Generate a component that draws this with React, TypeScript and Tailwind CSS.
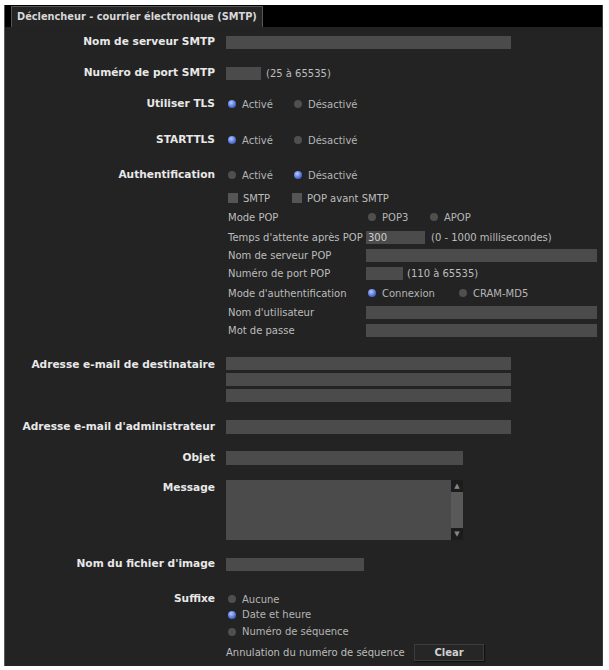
import React from "react";

const FONT = { fontFamily: '"DejaVu Sans", Verdana, sans-serif' };

const Radio = ({ on }: { on?: boolean }) => (
  <span
    className={
      on
        ? "inline-block w-[8px] h-[8px] rounded-full bg-[radial-gradient(circle_at_40%_35%,#b9c8ff,#4d6fd6_60%,#34489a)]"
        : "inline-block w-[8px] h-[8px] rounded-full bg-[#4f4f4f]"
    }
  />
);

const Option = ({ on, label, w }: { on?: boolean; label: string; w?: string }) => (
  <span className={"flex items-center gap-[6px] " + (w ?? "")}>
    <Radio on={on} />
    <span className="text-[10px] text-[#b5b5b5] whitespace-nowrap">{label}</span>
  </span>
);

const Field = ({ w, h = "h-[13px]", children }: { w: string; h?: string; children?: React.ReactNode }) => (
  <div className={"bg-[#4b4b4b] text-[10px] text-[#cfcfcf] pl-[2px] flex items-center " + w + " " + h}>{children}</div>
);

const Row = ({ label, mt, children, top }: { label: string; mt: string; children: React.ReactNode; top?: boolean }) => (
  <div className={"flex " + (top ? "items-start " : "items-center ") + mt}>
    <div className={"w-[210px] text-right text-[10.6px] font-bold text-[#e8e8e8] whitespace-nowrap " + (top ? "leading-[14px]" : "")}>{label}</div>
    <div className="ml-[11px] flex items-center">{children}</div>
  </div>
);

const SubRow = ({ label, mt, children }: { label: string; mt: string; children: React.ReactNode }) => (
  <div className={"flex items-center h-[14px] " + mt}>
    <div className="w-[138px] text-[10px] text-[#bdbdbd] whitespace-nowrap">{label}</div>
    <div className="flex items-center">{children}</div>
  </div>
);

export default function App() {
  return (
    <div className="w-[609px] h-[670px] bg-white pt-[5px] pl-[4px]" style={FONT}>
      <div className="w-[599px] h-[661px] bg-[#232323] border-l border-[#5a5a5a] border-r border-r-[#3a3a3a] flex flex-col">
        <div className="h-[22px] bg-black flex items-end pl-[6px]">
          <div className="h-[21px] px-[5px] bg-[#242424] border-t border-l border-r border-[#555] flex items-center text-[9.8px] font-bold text-[#d8d8d8] whitespace-nowrap">
            Déclencheur - courrier électronique (SMTP)
          </div>
        </div>

        <Row label="Nom de serveur SMTP" mt="mt-[8px] h-[14px]">
          <Field w="w-[285px]" />
        </Row>
        <Row label="Numéro de port SMTP" mt="mt-[17px] h-[14px]">
          <Field w="w-[35px]" />
          <span className="ml-[5px] text-[10px] text-[#bdbdbd]">(25 à 65535)</span>
        </Row>
        <Row label="Utiliser TLS" mt="mt-[17px] h-[14px]">
          <span className="ml-[2px]" />
          <Option on label="Activé" w="w-[66px]" />
          <Option label="Désactivé" />
        </Row>
        <Row label="STARTTLS" mt="mt-[22px] h-[14px]">
          <span className="ml-[2px]" />
          <Option on label="Activé" w="w-[66px]" />
          <Option label="Désactivé" />
        </Row>
        <Row label="Authentification" mt="mt-[21px] h-[14px]">
          <span className="ml-[2px]" />
          <Option label="Activé" w="w-[66px]" />
          <Option on label="Désactivé" />
        </Row>

        <div className="ml-[223px] flex flex-col">
          <div className="flex items-center h-[14px] mt-[9px]">
            <span className="flex items-center gap-[5px] w-[64px]">
              <span className="w-[10px] h-[10px] bg-[#555]" />
              <span className="text-[10px] text-[#bdbdbd]">SMTP</span>
            </span>
            <span className="flex items-center gap-[5px]">
              <span className="w-[10px] h-[10px] bg-[#555]" />
              <span className="text-[10px] text-[#bdbdbd]">POP avant SMTP</span>
            </span>
          </div>
          <SubRow label="Mode POP" mt="mt-[5px]">
            <span className="ml-[2px]" />
            <Option label="POP3" w="w-[62px]" />
            <Option label="APOP" />
          </SubRow>
          <SubRow label="Temps d'attente après POP" mt="mt-[6px]">
            <Field w="w-[59px]">300</Field>
            <span className="ml-[6px] text-[10px] text-[#bdbdbd]">(0 - 1000 millisecondes)</span>
          </SubRow>
          <SubRow label="Nom de serveur POP" mt="mt-[4px]">
            <Field w="w-[231px]" />
          </SubRow>
          <SubRow label="Numéro de port POP" mt="mt-[4px]">
            <Field w="w-[37px]" />
            <span className="ml-[4px] text-[10px] text-[#bdbdbd]">(110 à 65535)</span>
          </SubRow>
          <SubRow label="Mode d'authentification" mt="mt-[6px]">
            <span className="ml-[2px]" />
            <Option on label="Connexion" w="w-[91px]" />
            <Option label="CRAM-MD5" />
          </SubRow>
          <SubRow label="Nom d'utilisateur" mt="mt-[5px]">
            <Field w="w-[231px]" />
          </SubRow>
          <SubRow label="Mot de passe" mt="mt-[4px]">
            <Field w="w-[231px]" />
          </SubRow>
        </div>

        <Row label="Adresse e-mail de destinataire" mt="mt-[20px]" top>
          <div className="flex flex-col gap-[3px]">
            <Field w="w-[285px]" />
            <Field w="w-[285px]" />
            <Field w="w-[285px]" />
          </div>
        </Row>
        <Row label="Adresse e-mail d'administrateur" mt="mt-[18px] h-[14px]">
          <Field w="w-[285px]" h="h-[14px]" />
        </Row>
        <Row label="Objet" mt="mt-[17px] h-[14px]">
          <Field w="w-[237px]" h="h-[14px]" />
        </Row>
        <Row label="Message" mt="mt-[15px]" top>
          <div className="w-[237px] h-[60px] bg-[#4b4b4b] flex justify-end">
            <div className="w-[12px] h-full bg-[#595959] flex flex-col justify-between">
              <div className="h-[12px] bg-[#1c1c1c] flex items-center justify-center text-[7px] text-[#888]">▲</div>
              <div className="h-[12px] bg-[#1c1c1c] flex items-center justify-center text-[7px] text-[#888]">▼</div>
            </div>
          </div>
        </Row>
        <Row label="Nom du fichier d'image" mt="mt-[17px] h-[14px]">
          <Field w="w-[138px]" />
        </Row>
        <Row label="Suffixe" mt="mt-[21px] h-[14px]">
          <span className="ml-[2px]" />
          <Option label="Aucune" />
        </Row>
        <div className="ml-[223px] flex flex-col">
          <div className="h-[17px] flex items-center">
            <Option on label="Date et heure" />
          </div>
          <div className="h-[17px] flex items-center">
            <Option label="Numéro de séquence" />
          </div>
          <div className="mt-[4px] flex items-center -ml-[2px]">
            <span className="w-[188px] text-[10px] text-[#bdbdbd] whitespace-nowrap">Annulation du numéro de séquence</span>
            <button className="w-[70px] h-[17px] bg-[#262626] border border-[#3c3c3c] shadow-[1px_1px_1px_#111] text-[10px] font-bold text-[#d0d0d0]">
              Clear
            </button>
          </div>
        </div>
      </div>
    </div>
  );
}
